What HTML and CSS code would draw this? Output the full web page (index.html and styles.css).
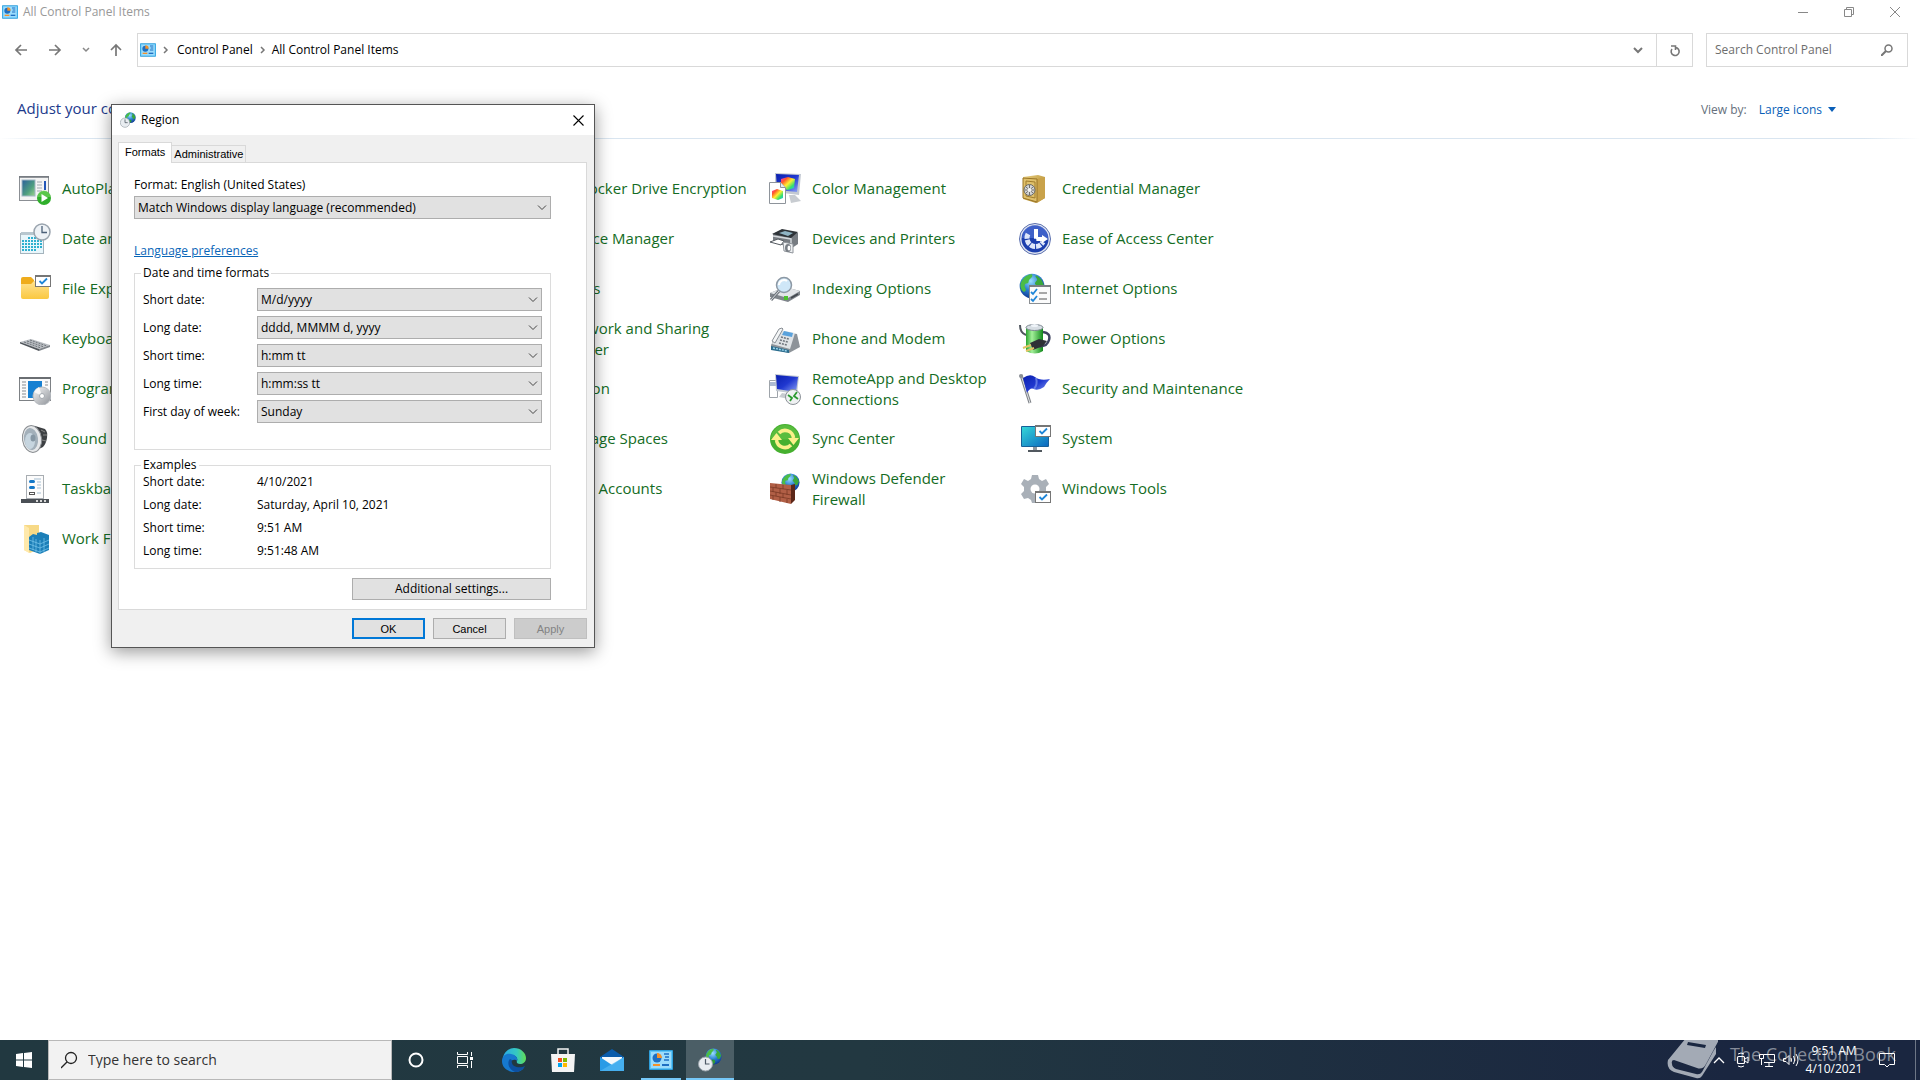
FILE: index.html
```
<!DOCTYPE html>
<html lang="en">
<head>
    <meta charset="UTF-8">
    <meta name="viewport" content="width=device-width, initial-scale=1.0">
    <title>All Control Panel Items</title>
    <link rel="stylesheet" href="styles.css">
</head>
<body>
    <!-- shared icons -->
    <svg class="sprite" width="0" height="0" aria-hidden="true">
        <defs>
            <linearGradient id="gBlue" x1="0" y1="0" x2="1" y2="1"><stop offset="0" stop-color="#0a1fae"/><stop offset=".5" stop-color="#2038d0"/><stop offset="1" stop-color="#8fa4f4"/></linearGradient>
            <linearGradient id="gGrey" x1="0" y1="0" x2="1" y2="1"><stop offset="0" stop-color="#f6f7f8"/><stop offset="1" stop-color="#8e9298"/></linearGradient>
            <linearGradient id="gGold" x1="0" y1="0" x2="1" y2="1"><stop offset="0" stop-color="#e9cf80"/><stop offset="1" stop-color="#a67c1e"/></linearGradient>
            <linearGradient id="gFolder" x1="0" y1="0" x2="0" y2="1"><stop offset="0" stop-color="#ffe393"/><stop offset="1" stop-color="#fac840"/></linearGradient>
            <linearGradient id="gGreen" x1="0" y1="0" x2="1" y2="0"><stop offset="0" stop-color="#2aa52f"/><stop offset=".35" stop-color="#a4f09a"/><stop offset="1" stop-color="#118a1b"/></linearGradient>
            <linearGradient id="gCyan" x1="0" y1="0" x2="1" y2="1"><stop offset="0" stop-color="#35d6d8"/><stop offset="1" stop-color="#0b68c0"/></linearGradient>
            <linearGradient id="gPhoto" x1="0" y1="0" x2="1" y2="1"><stop offset="0" stop-color="#2a5f9c"/><stop offset=".6" stop-color="#4f9f80"/><stop offset="1" stop-color="#9fd58c"/></linearGradient>
            <linearGradient id="gRainbow" x1="0" y1="0" x2="1" y2="1"><stop offset="0" stop-color="#ff2fd0"/><stop offset=".25" stop-color="#ff5a2a"/><stop offset=".5" stop-color="#ffee30"/><stop offset=".75" stop-color="#34e070"/><stop offset="1" stop-color="#20b8ff"/></linearGradient>
            <radialGradient id="gGlobe" cx=".45" cy=".3" r=".75"><stop offset="0" stop-color="#9be0ff"/><stop offset=".5" stop-color="#2a7fd0"/><stop offset="1" stop-color="#0b2f8a"/></radialGradient>
            <linearGradient id="gEdge" x1="0" y1="0" x2="1" y2="0"><stop offset="0" stop-color="#2aa9e8"/><stop offset=".6" stop-color="#35c9c0"/><stop offset="1" stop-color="#62dd55"/></linearGradient>
        </defs>

        <symbol id="i-panel" viewBox="0 0 24 20">
            <rect width="24" height="20" rx="1" fill="#2f9fdc"/>
            <rect x="1" y="1" width="22" height="18" fill="#5fc4f6"/>
            <rect x="2" y="2" width="20" height="16" fill="#9bdcfc"/>
            <circle cx="8" cy="8" r="4.500" fill="#1e6fc2"/>
            <path d="M8 8V3a5 5 0 0 1 5 5z" fill="#f3912b"/>
            <path d="M15 4h5M16 7h4M15 10h5" stroke="#1e6fc2" stroke-width="1.500"/>
            <path d="M4 15h7" stroke="#f3912b" stroke-width="2"/>
            <path d="M13 15h7" stroke="#1e6fc2" stroke-width="2"/>
        </symbol>
        <symbol id="i-globe" viewBox="0 0 20 20">
            <circle cx="10" cy="10" r="9.500" fill="url(#gGlobe)"/>
            <path d="M3 5c2-3 5-4 7-4 1 2-1 3-2 4s0 3-2 3-2 2-1 4-1 3-2 2C0 11 1 7 3 5z" fill="#4bbd45"/>
            <path d="M13 2c3 1 5 4 6 7-1 1-1 4-3 4s-1-3-3-4 1-3 1-4-2-2-1-3z" fill="#3aa83b"/>
            <path d="M8 14c2-1 4 0 4 2s-1 2-2 3c-2 0-3-3-2-5z" fill="#2f9a36"/>
        </symbol>
        <symbol id="i-region" viewBox="0 0 24 24">
            <svg x="7" y="0" width="17" height="17"><use href="#i-globe"/></svg>
            <circle cx="7.500" cy="16" r="7" fill="#e9edf1" stroke="#9aa3ab"/>
            <path d="M7.500 11v5h4" fill="none" stroke="#4f5a66" stroke-width="1.200"/>
        </symbol>
        <symbol id="i-checkbox" viewBox="0 0 16 12">
            <rect x=".5" y=".5" width="15" height="11" fill="#fff" stroke="#767676"/>
            <path d="M0 1h16" stroke="#767676" stroke-width="2"/>
            <path d="M4.500 6l2.500 2.500L12 3.500" fill="none" stroke="#1f86d8" stroke-width="1.800"/>
        </symbol>

        <symbol id="i-autoplay" viewBox="0 0 32 32">
            <rect x=".5" y="3.500" width="29" height="24" fill="#f4f4f4" stroke="#8b8f94"/>
            <path d="M0 4h30" stroke="#71767c" stroke-width="1.500"/>
            <rect x="3" y="7" width="13" height="16" fill="url(#gPhoto)" stroke="#9fb6c4"/>
            <path d="M18 9h5M18 12h5M18 15h5M18 18h5" stroke="#a0a8b0"/>
            <path d="M26 8v9" stroke="#2356b8" stroke-width="2"/>
            <circle cx="25" cy="25" r="7" fill="#2fae2b"/>
            <path d="M18.500 24a6.500 6.500 0 0 1 13 0z" fill="#7ad760" opacity=".6"/>
            <path d="M22.500 21v8l6.500-4z" fill="#fff"/>
        </symbol>
        <symbol id="i-date" viewBox="0 0 32 32">
            <rect x="1.500" y="10.500" width="23" height="20" fill="#e9f6fb" stroke="#a5b4bd"/>
            <rect x="2" y="9" width="22" height="3" fill="#b8c7cf"/>
            <path d="M9 15h14M3 18h20M3 21h20M3 24h20M3 27h14" stroke="#2fb0cf" stroke-width="2" stroke-dasharray="2 1"/>
            <circle cx="23" cy="9" r="8" fill="#eef2f6" stroke="#9aa4ae" stroke-width="1.500"/>
            <path d="M23 3v6.500h5" fill="none" stroke="#4c6078" stroke-width="1.300"/>
        </symbol>
        <symbol id="i-explorer" viewBox="0 0 32 32">
            <path d="M2 6q0-2 2-2h8l3 3v5H2z" fill="#efac1c"/>
            <path d="M2 11h10l3-3h15v16q0 2-2 2H4q-2 0-2-2z" fill="url(#gFolder)"/>
            <svg x="16" y="2" width="16" height="12"><use href="#i-checkbox"/></svg>
        </symbol>
        <symbol id="i-keyboard" viewBox="0 0 32 32">
            <path d="M1 19L12 16l19 6-11 4z" fill="#b9bdc2"/>
            <path d="M1 19v1.500L20 28v-2z" fill="#50555b"/>
            <path d="M20 26v2l11-4v-2z" fill="#81868c"/>
            <path d="M5 19l17 6M8 18l17 6M11 17l17 6" stroke="#70757b" stroke-dasharray="2 1"/>
        </symbol>
        <symbol id="i-programs" viewBox="0 0 32 32">
            <rect x=".5" y="4.500" width="31" height="23" fill="#fafafa" stroke="#7d8185"/>
            <path d="M0 5h32" stroke="#6a6e72" stroke-width="2"/>
            <path d="M3 9h4M3 12h4M3 15h4M3 18h4M3 21h4M3 24h4M26 9h3M26 12h3" stroke="#858b91"/>
            <rect x="9" y="8" width="14" height="17" fill="#1680d2"/>
            <circle cx="23" cy="23" r="9" fill="url(#gGrey)" stroke="#b6bbc0"/>
            <path d="M23 23l-8-4a9 9 0 0 1 5-5z" fill="#fff" opacity=".8"/>
            <circle cx="23" cy="23" r="2.500" fill="#fff" stroke="#a2a8ae"/>
        </symbol>
        <symbol id="i-sound" viewBox="0 0 32 32">
            <path d="M16 3l10 3q3 3 2 9t-4 9l-10 5z" fill="#3d4043"/>
            <path d="M22 7l4 2M24 12h4M23 17l4 1" stroke="#888"/>
            <ellipse cx="13" cy="16" rx="9.500" ry="13.500" fill="#e6e8ea" stroke="#8a8e92" transform="rotate(-8 13 16)"/>
            <ellipse cx="12" cy="16" rx="7" ry="11" fill="#a3b0ba" transform="rotate(-8 12 16)"/>
            <ellipse cx="11" cy="18" rx="5" ry="8" fill="#c6d5df"/>
            <ellipse cx="14" cy="15" rx="2.500" ry="3.500" fill="#8697a4"/>
        </symbol>
        <symbol id="i-taskbar" viewBox="0 0 32 32">
            <rect x="7.500" y="2.500" width="17" height="23" fill="#fcfcfc" stroke="#a8adb2"/>
            <rect x="10" y="7" width="6" height="3" rx="1.500" fill="#1478c8"/>
            <rect x="10" y="13" width="6" height="3" rx="1.500" fill="#1478c8"/>
            <rect x="10.500" y="19.500" width="5" height="2" fill="#fff" stroke="#555"/>
            <path d="M15 6h7M18 9h4M18 12h4M18 15h4M18 20h4" stroke="#a7bfd2"/>
            <rect x="2" y="26" width="28" height="4" fill="#4a4f55"/>
            <path d="M17 28h2M21 28h2M25 28h2" stroke="#d8d8d8" stroke-width="2"/>
        </symbol>
        <symbol id="i-work" viewBox="0 0 32 32">
            <path d="M5 2h15v24l-9 4-6-3z" fill="#f7d986"/>
            <path d="M5 2l5 3v25l-5-3z" fill="#ffe9ab"/>
            <path d="M10 14l4-3 4 1v-2l4-1 8 3v15l-9 4-11-4z" fill="#1c7fb8"/>
            <path d="M10 17l11 4 9-4M10 21l11 4 9-4M10 25l11 4 9-4M21 17v14M14 14v13M17 16v13M25 15v14" fill="none" stroke="#7cc8ee" stroke-width=".7"/>
        </symbol>
        <symbol id="i-color" viewBox="0 0 32 32">
            <path d="M6 0l26 1-2 21-24-3z" fill="#c3c9d2"/>
            <path d="M7 1l23 1-2 17-20-2z" fill="url(#gBlue)"/>
            <path d="M12 6l7-2 7 2-1 9-6 2-7-2z" fill="url(#gRainbow)"/>
            <path d="M20 22h6l6 6-10 2z" fill="#c8ccd1"/>
            <path d="M.5 9.500h11l5 5v16H.500z" fill="#fff" stroke="#8e949b"/>
            <path d="M11.500 9.500v5h5" fill="#e6e9ec" stroke="#8e949b"/>
            <path d="M3 18l5-2 6 2v7l-5 2-6-2z" fill="url(#gRainbow)"/>
        </symbol>
        <symbol id="i-printer" viewBox="0 0 32 32">
            <path d="M4 11l9-4 16 3v11l-6 4-19-6z" fill="#777c82"/>
            <path d="M3 11l10-5 16 3-7 6z" fill="#2e3338"/>
            <path d="M10 10l6-2 8 2-5 3z" fill="#8fb4c4"/>
            <path d="M1 19l8-3 6 2-3 4z" fill="#fff" stroke="#555b61"/>
            <path d="M4 13l18 3v8" fill="none" stroke="#d4d8dc" stroke-width="1.500"/>
            <path d="M14 19l10 2v9l-9-2z" fill="#eef0f2" stroke="#90959b"/>
            <ellipse cx="19" cy="25" rx="3" ry="4" fill="#777d84"/>
            <ellipse cx="20" cy="25" rx="1.500" ry="2.500" fill="#fff"/>
        </symbol>
        <symbol id="i-index" viewBox="0 0 32 32">
            <path d="M1 20l15-6 15 4v4l-12 7L1 24z" fill="#7f858b"/>
            <path d="M1 20l15-6 15 4-12 7z" fill="#e2e5e8"/>
            <rect x="15" y="23" width="4" height="4" fill="#4cc12e"/>
            <path d="M22 25l7-4" stroke="#42474d" stroke-width="1.500"/>
            <path d="M10 18l-8 9" stroke="#6f757c" stroke-width="3"/>
            <path d="M10 18l-8 9" stroke="#d9dde1" stroke-width="1"/>
            <circle cx="15" cy="12" r="7.500" fill="#cfe7f8" stroke="#8c98a4" stroke-width="1.500"/>
            <path d="M10 12a5 5 0 0 1 8-4" fill="none" stroke="#fff" stroke-width="2"/>
        </symbol>
        <symbol id="i-phone" viewBox="0 0 32 32">
            <path d="M2 22L10 8l18 3 3 13-11 6-18-4z" fill="#8d9399"/>
            <path d="M3 21L11 7l15 3-5 16z" fill="#dfe3e6"/>
            <path d="M15 8l9 2-1 4-10-2z" fill="#5aa2dc"/>
            <path d="M12 14l8 2M11 17l8 2M10 20l8 2" stroke="#70767d" stroke-width="1.500" stroke-dasharray="2 1"/>
            <path d="M3 18L10 6q4-2 4 0L6 20z" fill="#f4f6f7" stroke="#8a9096"/>
            <path d="M2 23l18 4v3L2 27z" fill="#2b6d8e"/>
            <path d="M4 25l14 3" stroke="#9ed5ec" stroke-width="1.500" stroke-dasharray="2 1"/>
        </symbol>
        <symbol id="i-remote" viewBox="0 0 32 32">
            <path d="M.5 7.500h8v17h-8z" fill="#fff" stroke="#9ea4aa"/>
            <path d="M1 10h6M1 12h6" stroke="#5d78a8"/>
            <path d="M6 1l24 2-2 18-21-3z" fill="#c3c9d2"/>
            <path d="M7 2l22 2-2 15-19-3z" fill="url(#gBlue)"/>
            <path d="M13 20l6 1 1 5-10-2z" fill="#c7cbd0"/>
            <circle cx="24" cy="24" r="7.500" fill="#eff1f2" stroke="#8c9298"/>
            <path d="M19 22l4 3-2 3M29 26l-4-3 3-4" fill="none" stroke="#2b9a30" stroke-width="1.800"/>
        </symbol>
        <symbol id="i-sync" viewBox="0 0 32 32">
            <circle cx="16" cy="16" r="15" fill="#46b02f"/>
            <path d="M16 2a14 14 0 0 1 14 13Q16 18 2 15A14 14 0 0 1 16 2z" fill="#6cc94e" opacity=".5"/>
            <path d="M10 10a8.500 8.500 0 0 1 14.500 5M22 22a8.500 8.500 0 0 1-14.500-5" fill="none" stroke="#fbf08a" stroke-width="3.500"/>
            <path d="M19 15h11l-5.500 7zM2 17h11l-5.500-7z" fill="#fbf08a"/>
        </symbol>
        <symbol id="i-firewall" viewBox="0 0 32 32">
            <svg x="12" y="0" width="19" height="19"><use href="#i-globe"/></svg>
            <path d="M22 12l4-1v16l-4 4z" fill="#5c2718"/>
            <path d="M1 10l21 2v19L1 26z" fill="#b15f46"/>
            <path d="M1 14l21 3M1 18l21 4M1 22l21 4M7 11v4M14 12v4M4 15v4M11 16v5M18 17v5M7 19v4M14 21v4M4 23v4M11 24v5M18 26v4" stroke="#7a3825" stroke-width=".8"/>
        </symbol>
        <symbol id="i-cred" viewBox="0 0 32 32">
            <path d="M4 4l15-2 7 2v21l-9 5-13-4z" fill="url(#gGold)"/>
            <path d="M18 6l8-2v21l-8 5z" fill="#c9a24a"/>
            <path d="M4 5l14 1v23L4 25z" fill="#dfc06b" stroke="#9a7526"/>
            <path d="M7 8l9 1v16l-9-2z" fill="none" stroke="#a07c2c"/>
            <circle cx="10.500" cy="17" r="5.500" fill="#d5d6d6" stroke="#6a6a66"/>
            <path d="M10.500 12v10M6 17h9M7 14l7 6M14 14l-7 6" stroke="#6f6f6c"/>
            <circle cx="10.500" cy="17" r="2" fill="#f4f4f2"/>
        </symbol>
        <symbol id="i-ease" viewBox="0 0 32 32">
            <circle cx="16" cy="16" r="15.500" fill="#e3e7f2" stroke="#5a6fae"/>
            <circle cx="16" cy="16" r="13.500" fill="#1c3fae"/>
            <path d="M3 15a13 13 0 0 1 26 0z" fill="#5576d8" opacity=".6"/>
            <path d="M9 11a8.500 8.500 0 1 0 15 8" fill="none" stroke="#dfe7fa" stroke-width="5" stroke-dasharray="5 1"/>
            <path d="M17 6v10h8" fill="none" stroke="#fff" stroke-width="4"/>
            <path d="M23 12l6 4-6 4z" fill="#fff"/>
            <circle cx="16" cy="17" r="1.500" fill="#1c3fae"/>
        </symbol>
        <symbol id="i-internet" viewBox="0 0 32 32">
            <svg x="0" y="0" width="26" height="26"><use href="#i-globe"/></svg>
            <rect x="10.500" y="12.500" width="21" height="18" fill="#fbfbfb" stroke="#8b8f93"/>
            <path d="M10 13h22" stroke="#7a7e82" stroke-width="2"/>
            <path d="M12 19l2 2 4-5M12 26l2 2 4-5" fill="none" stroke="#1f86d8" stroke-width="1.800"/>
            <path d="M20 20h8M20 26h8" stroke="#555"/>
        </symbol>
        <symbol id="i-power" viewBox="0 0 32 32">
            <path d="M1 2q0 8 6 10" fill="none" stroke="#50565e" stroke-width="2"/>
            <path d="M7 4h17v24q-8 5-17 0z" fill="url(#gGreen)"/>
            <ellipse cx="15.500" cy="4.500" rx="8.500" ry="3" fill="#d7dee4" stroke="#7d8791"/>
            <ellipse cx="15.500" cy="2.500" rx="3.500" ry="1.500" fill="#eef3f8"/>
            <path d="M24 9q8 1 6 8t-10 6" fill="none" stroke="#3f4460" stroke-width="2.500"/>
            <path d="M11 20l9-4 8 2-4 5-10 4z" fill="#2e3136"/>
            <path d="M4 25l8-3M7 28l8-3" stroke="#e2c565" stroke-width="2"/>
        </symbol>
        <symbol id="i-flag" viewBox="0 0 32 32">
            <path d="M2 2l9 28" stroke="#7f8388" stroke-width="3"/>
            <path d="M2 2l9 28" stroke="#dfe2e5"/>
            <circle cx="2" cy="3" r="2" fill="#8b8f95"/>
            <path d="M4 5q7-5 12-1t15 2q-4 4-6 8-6 4-10 2t-7 4z" fill="url(#gBlue)"/>
            <path d="M17 5q2 6-2 11" fill="none" stroke="#7d93ee" stroke-width="2" opacity=".7"/>
        </symbol>
        <symbol id="i-system" viewBox="0 0 32 32">
            <rect x="2" y="3" width="28" height="21" rx="1" fill="#176098"/>
            <rect x="3" y="4" width="26" height="19" fill="url(#gCyan)"/>
            <path d="M14 24h4v4h-4z" fill="#8f979f"/>
            <path d="M9 28h14" stroke="#51585f" stroke-width="2"/>
            <svg x="16" y="2" width="16" height="12"><use href="#i-checkbox"/></svg>
        </symbol>
        <symbol id="i-tools" viewBox="0 0 32 32">
            <path d="M13 2h6l1 4 3 2 4-2 3 5-3 3v4l3 3-3 5-4-1-3 2-1 3h-6l-1-3-3-2-4 1-3-5 3-3v-4l-3-3 3-5 4 2 3-2z" fill="#a9b0b8"/>
            <circle cx="16" cy="16" r="4.500" fill="#fff"/>
            <svg x="16" y="18" width="16" height="12"><use href="#i-checkbox"/></svg>
        </symbol>
    </svg>

    <main class="window">
        <header class="titlebar">
            <svg class="title-icon"><use href="#i-panel"/></svg>
            <h1>All Control Panel Items</h1>
            <div class="window-buttons">
                <button type="button" aria-label="Minimize"><svg width="10" height="10"><path d="M0 5.500h10" stroke="#888"/></svg></button>
                <button type="button" aria-label="Restore"><svg width="10" height="10"><path d="M.5 2.500h7v7h-7zM2.500 2.500v-2h7v7h-2" fill="none" stroke="#888"/></svg></button>
                <button type="button" aria-label="Close"><svg width="10" height="10"><path d="M0 0l10 10M10 0L0 10" stroke="#888"/></svg></button>
            </div>
        </header>

        <nav class="toolbar">
            <div class="arrows">
                <button type="button" aria-label="Back"><svg width="14" height="14"><path d="M13 7H2M7 2L2 7l5 5" fill="none" stroke="#777" stroke-width="1.700"/></svg></button>
                <button type="button" aria-label="Forward"><svg width="14" height="14"><path d="M1 7h11M7 2l5 5-5 5" fill="none" stroke="#777" stroke-width="1.700"/></svg></button>
                <button type="button" aria-label="Recent locations"><svg width="14" height="14"><path d="M4 5l3 3 3-3" fill="none" stroke="#888" stroke-width="1.500"/></svg></button>
                <button type="button" aria-label="Up"><svg width="14" height="14"><path d="M7 13V2M2 7l5-5 5 5" fill="none" stroke="#777" stroke-width="1.700"/></svg></button>
            </div>
            <div class="address">
                <svg class="address-icon"><use href="#i-panel"/></svg>
                <svg class="crumb-arrow" width="6" height="8"><path d="M1 1l3 3-3 3" fill="none" stroke="#777" stroke-width="1.500"/></svg>
                <a href="#">Control Panel</a>
                <svg class="crumb-arrow" width="6" height="8"><path d="M1 1l3 3-3 3" fill="none" stroke="#777" stroke-width="1.500"/></svg>
                <a href="#">All Control Panel Items</a>
                <button class="history" type="button" aria-label="Previous locations"><svg width="10" height="8"><path d="M1 2l4 4 4-4" fill="none" stroke="#777" stroke-width="2"/></svg></button>
                <button class="refresh" type="button" aria-label="Refresh"><svg width="12" height="14"><path d="M6.500 4.500a4 4 0 1 1-3.500 1.500M2 3h4.500v4" fill="none" stroke="#777" stroke-width="1.600"/></svg></button>
            </div>
            <label class="search">
                <input type="search" placeholder="Search Control Panel" aria-label="Search Control Panel">
                <svg width="12" height="12"><circle cx="7.500" cy="4.500" r="3.500" fill="none" stroke="#777" stroke-width="1.500"/><path d="M5 7l-5 5" stroke="#777" stroke-width="2"/></svg>
            </label>
        </nav>

        <section class="heading">
            <h2>Adjust your computer's settings</h2>
            <span class="view-label">View by:</span>
            <button class="view-by" type="button">Large icons <svg width="8" height="5"><path d="M0 0h8L4 5z" fill="#0a5fb8"/></svg></button>
        </section>

        <div class="items">
            <a href="#"><svg><use href="#i-autoplay"/></svg><span>AutoPlay</span></a>
            <a href="#"><svg><use href="#i-date"/></svg><span>Backup and Restore</span></a>
            <a href="#"><svg><use href="#i-cred"/></svg><span>BitLocker Drive Encryption</span></a>
            <a href="#"><svg><use href="#i-color"/></svg><span>Color Management</span></a>
            <a href="#"><svg><use href="#i-cred"/></svg><span>Credential Manager</span></a>

            <a href="#"><svg><use href="#i-date"/></svg><span>Date and Time</span></a>
            <a href="#"><svg><use href="#i-programs"/></svg><span>Default Programs</span></a>
            <a href="#"><svg><use href="#i-printer"/></svg><span>Device Manager</span></a>
            <a href="#"><svg><use href="#i-printer"/></svg><span>Devices and Printers</span></a>
            <a href="#"><svg><use href="#i-ease"/></svg><span>Ease of Access Center</span></a>

            <a href="#"><svg><use href="#i-explorer"/></svg><span>File Explorer Options</span></a>
            <a href="#"><svg><use href="#i-work"/></svg><span>File History</span></a>
            <a href="#"><svg><use href="#i-explorer"/></svg><span>Fonts</span></a>
            <a href="#"><svg><use href="#i-index"/></svg><span>Indexing Options</span></a>
            <a href="#"><svg><use href="#i-internet"/></svg><span>Internet Options</span></a>

            <a href="#"><svg><use href="#i-keyboard"/></svg><span>Keyboard</span></a>
            <a href="#"><svg><use href="#i-keyboard"/></svg><span>Mouse</span></a>
            <a href="#"><svg><use href="#i-internet"/></svg><span>Network and Sharing Center</span></a>
            <a href="#"><svg><use href="#i-phone"/></svg><span>Phone and Modem</span></a>
            <a href="#"><svg><use href="#i-power"/></svg><span>Power Options</span></a>

            <a href="#"><svg><use href="#i-programs"/></svg><span>Programs and Features</span></a>
            <a href="#"><svg><use href="#i-system"/></svg><span>Recovery</span></a>
            <a href="#"><svg><use href="#i-region"/></svg><span>Region</span></a>
            <a href="#"><svg><use href="#i-remote"/></svg><span>RemoteApp and Desktop Connections</span></a>
            <a href="#"><svg><use href="#i-flag"/></svg><span>Security and Maintenance</span></a>

            <a href="#"><svg><use href="#i-sound"/></svg><span>Sound</span></a>
            <a href="#"><svg><use href="#i-sound"/></svg><span>Speech Recognition</span></a>
            <a href="#"><svg><use href="#i-index"/></svg><span>Storage Spaces</span></a>
            <a href="#"><svg><use href="#i-sync"/></svg><span>Sync Center</span></a>
            <a href="#"><svg><use href="#i-system"/></svg><span>System</span></a>

            <a href="#"><svg><use href="#i-taskbar"/></svg><span>Taskbar and Navigation</span></a>
            <a href="#"><svg><use href="#i-system"/></svg><span>Troubleshooting</span></a>
            <a href="#"><svg><use href="#i-explorer"/></svg><span>User Accounts</span></a>
            <a href="#"><svg><use href="#i-firewall"/></svg><span>Windows Defender Firewall</span></a>
            <a href="#"><svg><use href="#i-tools"/></svg><span>Windows Tools</span></a>

            <a href="#"><svg><use href="#i-work"/></svg><span>Work Folders</span></a>
        </div>

        <form class="dialog" role="dialog" aria-labelledby="dialogTitle">
            <div class="dialog-title">
                <svg class="dialog-icon"><use href="#i-region"/></svg>
                <h2 id="dialogTitle">Region</h2>
                <button type="button" aria-label="Close dialog"><svg width="11" height="11"><path d="M.5.500l10 10M10.500.500l-10 10" stroke="#000" stroke-width="1.100"/></svg></button>
            </div>
            <div class="tabs" role="tablist">
                <button type="button" class="tab active" role="tab" aria-selected="true">Formats</button>
                <button type="button" class="tab" role="tab" aria-selected="false">Administrative</button>
            </div>
            <div class="panel">
                <label for="format">Format: English (United States)</label>
                <div class="select">
                    <select id="format"><option>Match Windows display language (recommended)</option></select>
                    <svg width="10" height="6"><path d="M1 .500l4 4 4-4" fill="none" stroke="#444"/></svg>
                </div>
                <a class="language" href="#">Language preferences</a>

                <fieldset class="formats">
                    <legend>Date and time formats</legend>
                    <label for="shortDate">Short date:</label>
                    <div class="select"><select id="shortDate"><option>M/d/yyyy</option></select><svg width="10" height="6"><path d="M1 .500l4 4 4-4" fill="none" stroke="#444"/></svg></div>
                    <label for="longDate">Long date:</label>
                    <div class="select"><select id="longDate"><option>dddd, MMMM d, yyyy</option></select><svg width="10" height="6"><path d="M1 .500l4 4 4-4" fill="none" stroke="#444"/></svg></div>
                    <label for="shortTime">Short time:</label>
                    <div class="select"><select id="shortTime"><option>h:mm tt</option></select><svg width="10" height="6"><path d="M1 .500l4 4 4-4" fill="none" stroke="#444"/></svg></div>
                    <label for="longTime">Long time:</label>
                    <div class="select"><select id="longTime"><option>h:mm:ss tt</option></select><svg width="10" height="6"><path d="M1 .500l4 4 4-4" fill="none" stroke="#444"/></svg></div>
                    <label for="firstDay">First day of week:</label>
                    <div class="select"><select id="firstDay"><option>Sunday</option></select><svg width="10" height="6"><path d="M1 .500l4 4 4-4" fill="none" stroke="#444"/></svg></div>
                </fieldset>

                <fieldset class="examples">
                    <legend>Examples</legend>
                    <dl>
                        <dt>Short date:</dt><dd>4/10/2021</dd>
                        <dt>Long date:</dt><dd>Saturday, April 10, 2021</dd>
                        <dt>Short time:</dt><dd>9:51 AM</dd>
                        <dt>Long time:</dt><dd>9:51:48 AM</dd>
                    </dl>
                </fieldset>
                <button class="push additional" type="button">Additional settings...</button>
            </div>
            <div class="dialog-buttons">
                <button class="push default" type="button">OK</button>
                <button class="push" type="button">Cancel</button>
                <button class="push" type="button" disabled>Apply</button>
            </div>
        </form>
    </main>

    <footer class="taskbar">
        <button class="start" type="button" aria-label="Start"><svg width="16" height="16"><path d="M0 2l7-1v6.500H0zM8 1l8-1v7.500H8zM0 8.500h7V15l-7-1zM8 8.500h8V16l-8-1z" fill="#fff"/></svg></button>
        <label class="task-search">
            <svg width="17" height="18"><circle cx="10" cy="7" r="5.500" fill="none" stroke="#222" stroke-width="1.300"/><path d="M6 11l-6 6" stroke="#222" stroke-width="1.300"/></svg>
            <input type="text" placeholder="Type here to search" aria-label="Type here to search">
        </label>
        <div class="apps">
            <button type="button" aria-label="Cortana"><svg width="16" height="16"><circle cx="8" cy="8" r="6.500" fill="none" stroke="#fff" stroke-width="2"/></svg></button>
            <button type="button" aria-label="Task View"><svg width="16" height="16"><path d="M.5 0v2.500h10V0M.5 16v-2.500h10V16M.5 4.500h10v7H.500zM14.500 0v4M14.500 9v7" fill="none" stroke="#fff"/><path d="M13 5h3v3h-3z" fill="#fff"/></svg></button>
            <button type="button" aria-label="Microsoft Edge">
                <svg width="24" height="24">
                    <path d="M1 10C2 4 7 0 12 0c7 0 12 5 12 10 0 4-3 6-6 6-2 0-4-1-3-3 2-5-6-9-14-3z" fill="url(#gEdge)"/>
                    <path d="M0 13c0-6 5-8 9-7 5 1 7 4 6 7-1-2-6-2-7 2-1 5 4 9 10 7l4-2c-3 3-6 4-9 4C6 24 0 20 0 13z" fill="#1679cf"/>
                    <path d="M8 11c-3 3-2 10 5 13 4 0 8-2 10-6-5 3-15 1-13-6z" fill="#0d50a0"/>
                </svg>
            </button>
            <button type="button" aria-label="Microsoft Store">
                <svg width="24" height="24">
                    <path d="M7 7V1h10v6" fill="none" stroke="#f4f4f4" stroke-width="1.500"/>
                    <path d="M0 6h24l-1 18H1z" fill="#f4f4f4"/>
                    <path d="M7 10h4v4H7z" fill="#f25022"/><path d="M12 10h4v4h-4z" fill="#7fba00"/><path d="M7 15h4v4H7z" fill="#00a4ef"/><path d="M12 15h4v4h-4z" fill="#ffb900"/>
                </svg>
            </button>
            <button type="button" aria-label="Mail">
                <svg width="24" height="24">
                    <path d="M0 9l12-8 12 8v5H0z" fill="#0a5cab"/>
                    <path d="M2 9h20v8H2z" fill="#f5f9fc"/>
                    <path d="M0 9l12 8 12-8v14H0z" fill="#2a9be6"/>
                    <path d="M24 9v14H0z" fill="#52b8f2" opacity=".7"/>
                </svg>
            </button>
            <button class="open" type="button" aria-label="Control Panel"><svg width="24" height="20"><use href="#i-panel"/></svg></button>
            <button class="open current" type="button" aria-label="Region"><svg width="24" height="24"><use href="#i-region"/></svg></button>
        </div>

        <div class="tray">
            <div class="brand">
                <svg width="52" height="40" viewBox="0 0 52 40">
                    <path d="M20-2h34L40 24q-3 6-9 4L8 20Q5 20 6 24q0 3 4 5l20 5q4 1 6-2l12-22 2-3v7L36 36q-2 3-6 2L8 32Q0 29 2 20z" fill="#a3aab5"/>
                    <path d="M22 2l18 3-1 3-18-3z" fill="#1a2741"/>
                </svg>
                <span>The Collection Book</span>
            </div>
            <button type="button" aria-label="Show hidden icons"><svg width="12" height="8"><path d="M1 7l5-5 5 5" fill="none" stroke="#fff" stroke-width="1.300"/></svg></button>
            <button type="button" aria-label="Meet Now"><svg width="14" height="16"><rect x="1.500" y="4.500" width="7" height="7" rx="1" fill="none" stroke="#fff" stroke-width="1.200"/><path d="M9 7l3-2v6l-3-2M2 2q3-2 6 0M2 14q3 2 6 0" fill="none" stroke="#fff"/></svg></button>
            <button type="button" aria-label="Network"><svg width="16" height="14"><path d="M4.500 1.500h11v8H5M.5 1.500h4v4h-4zM2.500 6v6M10 10v3M6 13.500h8" fill="none" stroke="#fff"/></svg></button>
            <button type="button" aria-label="Volume"><svg width="17" height="14"><path d="M.5 5.500H3l3-3v9l-3-3H.500zM8 5q1 2 0 4M10.500 3q2.500 4 0 8M13 1q4 6 0 12" fill="none" stroke="#fff"/></svg></button>
            <time datetime="2021-04-10T09:51"><span>9:51 AM</span><span>4/10/2021</span></time>
            <button class="notify" type="button" aria-label="Notifications"><svg width="16" height="16"><path d="M.5 1.500h15v11h-5L8 15l-2.500-2.500h-5z" fill="none" stroke="#fff"/></svg></button>
        </div>
    </footer>
</body>
</html>
```
FILE: styles.css
```
* {
    box-sizing: border-box;
}
body {
    display: flex;
    flex-direction: column;
    height: 100vh;
    margin: 0;
    overflow: hidden;
    background: #fff;
    color: #000;
    font-family: "Open Sans", "Segoe UI", sans-serif;
    font-size: 12px;
    line-height: 16px;
}
h1, h2, dl, dd, fieldset {
    margin: 0;
    padding: 0;
}
a {
    color: inherit;
    text-decoration: none;
}
button, input, select {
    margin: 0;
    padding: 0;
    border: 0;
    background: none;
    color: inherit;
    font: inherit;
}
svg {
    display: block;
    flex: none;
}
.sprite {
    position: absolute;
}

/* main window */
.window {
    position: relative;
    flex: 1;
    min-height: 0;
}
.titlebar {
    display: flex;
    align-items: center;
    height: 24px;
    padding-left: 2px;
}
.title-icon, .address-icon {
    width: 16px;
    height: 14px;
}
.titlebar h1 {
    margin-left: 5px;
    color: #999;
    font-size: 12px;
    font-weight: 400;
}
.window-buttons {
    display: flex;
    margin-left: auto;
}
.window-buttons button {
    display: grid;
    place-items: center;
    width: 46px;
    height: 20px;
}
.window-buttons button:last-child {
    margin-right: 2px;
}
.toolbar {
    display: flex;
    gap: 13px;
    height: 34px;
    margin: 9px 12px 0 14px;
}
.arrows {
    display: grid;
    grid-template-columns: 34px 31px 30px 15px;
    align-items: center;
}
.address {
    display: flex;
    flex: 1;
    align-items: center;
    padding-left: 2px;
    border: 1px solid #d9d9d9;
}
.crumb-arrow {
    margin: 0 8px 0 7px;
}
.address a + .crumb-arrow {
    margin: 0 6px 0 7px;
}
.history, .refresh {
    display: grid;
    place-items: center;
    width: 36px;
    height: 100%;
}
.history {
    margin-left: auto;
}
.refresh {
    border-left: 1px solid #d9d9d9;
}
.search {
    display: flex;
    align-items: center;
    width: 202px;
    padding: 0 14px 0 8px;
    border: 1px solid #d9d9d9;
}
.search input {
    flex: 1;
    min-width: 0;
    outline: 0;
}
.search input::placeholder {
    color: #6d6d6d;
    opacity: 1;
}
.heading {
    display: flex;
    align-items: center;
    height: 72px;
    padding: 14px 84px 0 17px;
    border-bottom: 1px solid;
    border-image: linear-gradient(90deg, #fff, #d9e5f0 3%, #d9e5f0 97%, #fff) 1;
}
.heading h2 {
    margin-right: auto;
    padding-bottom: 3px;
    color: #1c3a8c;
    font-size: 15px;
    font-weight: 400;
}
.view-label {
    margin-right: 12px;
    color: #66707c;
}
.view-by {
    display: flex;
    gap: 6px;
    align-items: center;
    color: #0a5fb8;
}
.items {
    display: grid;
    grid-template-columns: repeat(5, 250px);
    grid-auto-rows: 50px;
    margin: 25px 0 0 19px;
}
.items a {
    display: flex;
    gap: 11px;
    align-items: center;
    color: #146c24;
    font-size: 15px;
    line-height: 21px;
}
.items a svg {
    width: 32px;
    height: 32px;
}
.items a span {
    flex: none;
    width: 188px;
    padding-bottom: 1px;
}

/* region dialog */
.dialog {
    position: absolute;
    top: 104px;
    left: 111px;
    width: 484px;
    padding-bottom: 8px;
    border: 1px solid #555;
    background: #f0f0f0;
    box-shadow: 0 4px 16px rgba(0, 0, 0, .4);
}
.dialog-title {
    display: flex;
    align-items: center;
    height: 30px;
    padding: 0 10px 0 8px;
    background: #fff;
}
.dialog-title h2 {
    margin: 0 auto 0 5px;
    font-size: 12px;
    font-weight: 400;
}
.dialog-icon {
    width: 16px;
    height: 16px;
}
.tabs {
    display: flex;
    align-items: flex-end;
    padding: 7px 6px 0;
}
.tab {
    height: 18px;
    margin-bottom: -1px;
    padding: 0 2px;
    border: 1px solid #d9d9d9;
    border-left: 0;
    font-family: "Liberation Sans", Arial, sans-serif;
    font-size: 11px;
}
.tab.active {
    z-index: 1;
    height: 21px;
    padding: 0 6px 3px;
    border-left: 1px solid #d9d9d9;
    border-bottom: 0;
    background: #fff;
}
.panel {
    display: flex;
    flex-direction: column;
    margin: 0 7px 0 6px;
    padding: 14px 35px 9px 15px;
    border: 1px solid #d9d9d9;
    background: #fff;
}
.select {
    position: relative;
}
.select select {
    display: block;
    width: 100%;
    height: 23px;
    padding: 0 24px 0 3px;
    border: 1px solid #adadad;
    border-radius: 0;
    background: #e1e1e1;
    appearance: none;
}
.select svg {
    position: absolute;
    top: 9px;
    right: 4px;
    pointer-events: none;
}
.panel > .select {
    margin-top: 3px;
}
.language {
    align-self: flex-start;
    margin: 24px 0 6px;
    color: #0a66b8;
    text-decoration: underline;
}
fieldset {
    min-width: 0;
    border: 1px solid #dcdcdc;
}
legend {
    margin-left: -2px;
    padding: 0 2px;
}
.formats {
    display: grid;
    grid-template-columns: 114px 1fr;
    row-gap: 5px;
    align-items: center;
    height: 185px;
    padding: 7px 8px 26px;
}
.examples {
    height: 112px;
    margin-top: 7px;
    padding: 0 8px;
}
.examples dl {
    display: grid;
    grid-template-columns: 114px 1fr;
    row-gap: 7px;
    padding-top: 1px;
}
.push {
    width: 73px;
    height: 21px;
    border: 1px solid #adadad;
    background: #e1e1e1;
    font-family: "Liberation Sans", Arial, sans-serif;
    font-size: 11px;
}
.push.additional {
    align-self: flex-end;
    width: 199px;
    height: 22px;
    margin-top: 9px;
    font-family: inherit;
    font-size: 12px;
}
.push.default {
    border: 2px solid #0078d7;
}
.push:disabled {
    border-color: #bfbfbf;
    background: #ccc;
    color: #838383;
}
.dialog-buttons {
    display: flex;
    gap: 8px;
    justify-content: flex-end;
    padding: 8px 7px 0;
}

/* taskbar */
.taskbar {
    display: flex;
    height: 40px;
    background: linear-gradient(90deg, #213840, #223841 45%, #1a2640 90%);
    color: #fff;
}
.start {
    display: grid;
    place-items: center;
    width: 48px;
}
.task-search {
    display: flex;
    gap: 10px;
    align-items: center;
    width: 344px;
    padding-left: 12px;
    border: 1px solid #b8b8b8;
    background: #f2f2f2;
    font-size: 14px;
}
.task-search input {
    flex: 1;
    min-width: 0;
    outline: 0;
}
.task-search input::placeholder {
    color: #333;
    opacity: 1;
}
.apps {
    display: flex;
    gap: 1px;
}
.apps button {
    display: grid;
    place-items: center;
    width: 48px;
}
.open {
    background: linear-gradient(#76c8f8, #76c8f8) center bottom / 40px 2px no-repeat;
}
.open.current {
    background-color: #4b5e66;
    background-size: 48px 2px;
}
.tray {
    position: relative;
    display: flex;
    align-items: center;
    margin-left: auto;
    margin-right: 4px;
    padding-right: 20px;
    border-right: 1px solid #6d7686;
}
.tray button {
    position: relative;
    display: grid;
    place-items: center;
    width: 24px;
    height: 40px;
}
/* the brand mark runs behind the tray icons */
.brand {
    position: absolute;
    top: 0;
    right: 19px;
    display: flex;
    gap: 12px;
    height: 40px;
    color: #858c99;
    font-size: 18px;
    line-height: 28px;
    white-space: nowrap;
}
.tray time {
    position: relative;
    display: flex;
    flex-direction: column;
    width: 62px;
    line-height: 18px;
    text-align: center;
}
.tray .notify {
    width: 16px;
    margin-left: 14px;
}
```
